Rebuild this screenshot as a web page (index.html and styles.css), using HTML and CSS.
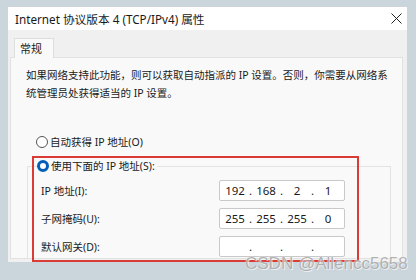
FILE: index.html
```html
<!DOCTYPE html>
<html>
<head>
  <title>Internet 协议版本 4 (TCP/IPv4) 属性</title>
  <link rel="stylesheet" href="styles.css">
</head>
<body>
  <div class="window">
    <div class="titlebar">
      <span class="title">Internet 协议版本 4 (TCP/IPv4) 属性</span>
      <svg class="close" width="11" height="11" viewBox="0 0 11 11">
        <path d="M0.5 0.5 L10.5 10.5 M10.5 0.5 L0.5 10.5" stroke="#222" stroke-width="1" fill="none"/>
      </svg>
    </div>

    <div class="tabs">
      <div class="tab">常规</div>
    </div>

    <div class="panel">
      <p class="desc">如果网络支持此功能，则可以获取自动指派的 IP 设置。否则，你需要从网络系<br>统管理员处获得适当的 IP 设置。</p>

      <div class="radio radio-auto">
        <span class="dot"></span>
        <span>自动获得 IP 地址(O)</span>
      </div>

      <div class="group">
        <div class="radio group-title">
          <span class="dot checked"></span>
          <span>使用下面的 IP 地址(S):</span>
        </div>

        <div class="row">
          <span class="label">IP 地址(I):</span>
          <div class="ip">
            <span class="seg">192</span><span class="sep">.</span>
            <span class="seg">168</span><span class="sep">.</span>
            <span class="seg">2</span><span class="sep">.</span>
            <span class="seg">1</span>
          </div>
        </div>
        <div class="row">
          <span class="label">子网掩码(U):</span>
          <div class="ip">
            <span class="seg">255</span><span class="sep">.</span>
            <span class="seg">255</span><span class="sep">.</span>
            <span class="seg">255</span><span class="sep">.</span>
            <span class="seg">0</span>
          </div>
        </div>
        <div class="row">
          <span class="label">默认网关(D):</span>
          <div class="ip">
            <span class="seg"></span><span class="sep">.</span>
            <span class="seg"></span><span class="sep">.</span>
            <span class="seg"></span><span class="sep">.</span>
            <span class="seg"></span>
          </div>
        </div>
      </div>
    </div>
  </div>

  <div class="highlight"></div>
  <div class="watermark">CSDN @Allencc5658</div>
</body>
</html>
```

FILE: styles.css
```css
body {
  margin: 0;
  padding: 7px 9px 0 8px;
  height: 280px;
  box-sizing: border-box;
  background-color: #cbd5dc;
  font-family: "Noto Sans", "Noto Sans CJK SC", sans-serif;
  font-size: 10.5px;
  color: #1a1a1a;
  position: relative;
  overflow: hidden;
}
.window {
  width: 399px;
  height: 255px;
  background-color: #f0f0f0;
  display: flex;
  flex-direction: column;
}
.titlebar {
  height: 23px;
  background-color: #ffffff;
  display: flex;
  align-items: center;
  justify-content: space-between;
  padding: 0 5px 0 7px;
}
.title {
  font-size: 11.7px;
  line-height: 18px;
}
.tabs {
  height: 27px;
  display: flex;
  align-items: flex-end;
  padding-left: 6px;
}
.tab {
  width: 33px;
  height: 19px;
  background-color: #f9f9f9;
  border: 1px solid #dddddd;
  border-bottom: none;
  line-height: 19px;
  padding-left: 5px;
  margin-bottom: -1px;
  position: relative;
  font-size: 11px;
}
.panel {
  flex: 1;
  margin: 0 4px 3px 2px;
  background-color: #f9f9f9;
  border: 1px solid #e2e2e2;
  overflow: hidden;
}
.desc {
  margin: 8px 0 0 15px;
  line-height: 18px;
  white-space: nowrap;
}
.radio {
  display: flex;
  align-items: center;
  gap: 2px;
  line-height: 18px;
}
.radio-auto {
  margin: 31px 0 0 25px;
}
.dot {
  width: 12px;
  height: 12px;
  border-radius: 50%;
  border: 1px solid #555555;
  background-color: #ffffff;
  box-sizing: border-box;
}
.dot.checked {
  border: 3.5px solid #005fb8;
  background-color: #ffffff;
}
.group {
  margin: 15px 11px 0 16px;
  border: 1px solid #e3e3e3;
  padding: 13px 0 12px 13px;
  position: relative;
  display: flex;
  flex-direction: column;
  gap: 7px;
}
.group-title {
  position: absolute;
  top: -10px;
  left: 9px;
  background-color: #f9f9f9;
  padding-right: 2px;
}
.row {
  display: flex;
  align-items: center;
  height: 21px;
}
.label {
  width: 178px;
}
.ip {
  width: 126px;
  height: 21px;
  box-sizing: border-box;
  background-color: #ffffff;
  border: 1px solid #c9c9c9;
  border-radius: 2px;
  display: flex;
  align-items: center;
  padding-left: 2px;
  font-size: 11.5px;
}
.seg {
  width: 26px;
  text-align: center;
}
.sep {
  width: 5px;
  text-align: center;
}
.highlight {
  position: absolute;
  left: 32px;
  top: 156px;
  width: 327px;
  height: 106px;
  border: 2px solid #d93b36;
  box-sizing: border-box;
}
.watermark {
  position: absolute;
  left: 245px;
  top: 254px;
  font-family: "Liberation Sans", Arial, sans-serif;
  font-size: 17px;
  color: rgba(110, 110, 110, 0.55);
  text-shadow: 0 0 1px #ffffff, 1px 1px 0 rgba(255, 255, 255, 0.6);
  white-space: nowrap;
}
```
